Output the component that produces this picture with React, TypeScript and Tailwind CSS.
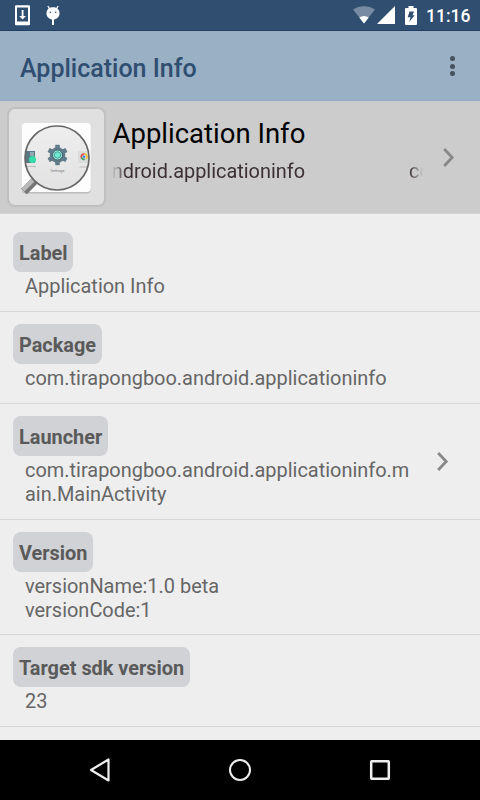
import React from 'react';

interface InfoRowProps {
  label: string;
  lines: string[];
  hasLink?: boolean;
  className?: string;
}

const rows: InfoRowProps[] = [
  { label: 'Label', lines: ['Application Info'], className: 'h-[92px]' },
  { label: 'Package', lines: ['com.tirapongboo.android.applicationinfo'], className: 'h-[92px]' },
  {
    label: 'Launcher',
    lines: ['com.tirapongboo.android.applicationinfo.m', 'ain.MainActivity'],
    hasLink: true,
    className: 'h-[116px]'
  },
  { label: 'Version', lines: ['versionName:1.0 beta', 'versionCode:1'], className: 'h-[115px]' },
  { label: 'Target sdk version', lines: ['23'], className: 'h-[92px]' }
];

const Chevron: React.FC = () => (
  <svg className="w-3 h-5 shrink-0" viewBox="0 0 12 20" fill="none" stroke="#888888" strokeWidth="2.8">
    <path d="M1.2 1 9.2 9.5 1.2 18" />
  </svg>
);

const StatusBar: React.FC = () => (
  <div className="h-[31px] bg-[#2f4e70] border-b border-[#1f4063] flex items-center justify-between pl-[15px] pr-[10px]">
    <div className="flex items-center gap-4">
      <svg className="w-[15px] h-[21px]" viewBox="0 0 15 21">
        <path
          fill="#fff"
          fillRule="evenodd"
          d="M1 .3h13a1 1 0 0 1 1 1v18a1 1 0 0 1-1 1H1a1 1 0 0 1-1-1v-18a1 1 0 0 1 1-1ZM2 2.5v14h11v-14Z"
        />
        <path fill="#fff" d="M6.7 5h1.8v6H11l-3.4 3.6L4.2 11h2.5Z" />
      </svg>
      <svg className="w-[14px] h-[21px]" viewBox="0 0 14 21">
        <path d="m1.8 1 2 3M12.2 1l-2 3" stroke="#fff" strokeWidth="1.3" />
        <path
          fill="#fff"
          d="M2.5 3.5C5 1.8 9 1.8 11.5 3.5 13 5 13.5 6.5 13.5 8.5c0 3.5-3 6-6.5 6s-6.5-2.5-6.5-6c0-2 .5-3.5 2-5Z"
        />
        <path fill="#fff" d="M6 14h2v6H6z" />
        <circle cx="4.3" cy="7.2" r=".8" fill="#2f4e70" />
        <circle cx="9.7" cy="7.2" r=".8" fill="#2f4e70" />
      </svg>
    </div>
    <div className="flex items-center">
      <svg className="w-[22px] h-[18px]" viewBox="0 0 22 18">
        <path fill="#fff" fillOpacity=".35" d="M0 3.5C6.5-1 15.5-1 22 3.5L11 17.5Z" />
        <path fill="#fff" d="M6.3 11.5c3-2 6.4-2 9.4 0L11 17.5Z" />
      </svg>
      <svg className="w-[18px] h-[18px] ml-[2px]" viewBox="0 0 18 18">
        <path fill="#fff" d="M18 0v18H0Z" />
      </svg>
      <svg className="w-3 h-[19px] ml-[10px] mr-[9px]" viewBox="0 0 12 19">
        <path
          fill="#fff"
          d="M3.5 0h5v2H11a1 1 0 0 1 1 1v15a1 1 0 0 1-1 1H1a1 1 0 0 1-1-1V3a1 1 0 0 1 1-1h2.5Z"
        />
        <path fill="#2f4e70" d="M4.5 5.5H9L7.5 9.3H9.7L4.2 16 5.5 11.2H2.7Z" />
      </svg>
      <span className="w-[44px] text-[17.5px] leading-none font-medium text-white pt-[3px]">11:16</span>
    </div>
  </div>
);

const Toolbar: React.FC = () => (
  <div className="h-[70px] bg-[#9ab0c5] border-b border-[#8eabc9] flex items-center justify-between pl-[20px] pr-[25px]">
    <h1 className="text-[25px] leading-none font-medium text-[#2f4e70] pt-[5px]">Application Info</h1>
    <div className="flex flex-col gap-[2.5px] pt-[1px]">
      <span className="w-[5px] h-[5px] rounded-full bg-[#46525e]" />
      <span className="w-[5px] h-[5px] rounded-full bg-[#46525e]" />
      <span className="w-[5px] h-[5px] rounded-full bg-[#46525e]" />
    </div>
  </div>
);

const Gear: React.FC = () => (
  <g transform="translate(36.5 33)">
    <g fill="#607b89">
      <circle r="7.8" />
      <rect x="-2.3" y="-10.3" width="4.6" height="20.6" rx=".8" />
      <rect x="-2.3" y="-10.3" width="4.6" height="20.6" rx=".8" transform="rotate(60)" />
      <rect x="-2.3" y="-10.3" width="4.6" height="20.6" rx=".8" transform="rotate(120)" />
    </g>
    <circle r="5" fill="#8ff0dc" stroke="#44616d" strokeWidth="1" />
    <circle r="3.2" fill="#6fe8d0" stroke="#4b8a8a" strokeWidth=".8" />
  </g>
);

const AppIcon: React.FC = () => (
  <div className="w-[99px] h-[100px] shrink-0 rounded-[8px] border-[2.5px] border-[#c0c0c0] bg-[#e0e0e0] flex items-center justify-center pt-px">
    <svg className="w-[72px] h-[72px]" viewBox="0 0 72 72">
      <defs>
        <clipPath id="lens">
          <circle cx="36" cy="36" r="32" />
        </clipPath>
        <linearGradient id="glass" x1="0" y1="0" x2="0" y2="1">
          <stop offset="0" stopColor="#eeeeee" />
          <stop offset="1" stopColor="#e2e2e2" />
        </linearGradient>
      </defs>
      <rect x=".8" y="2" width="69" height="69.5" rx="4" fill="#bdbdbd" />
      <rect x=".8" y="1" width="69" height="69" rx="4" fill="#fdfdfd" />
      <path d="M14 58.5 3 69.5" stroke="#777" strokeWidth="8" />
      <path d="M13 57 2 68" stroke="#b9b9b9" strokeWidth="4" />
      <circle cx="36" cy="36" r="32" fill="url(#glass)" />
      <g clipPath="url(#lens)">
        <rect x="4" y="29" width="10" height="12" fill="#5b7784" />
        <rect x="9" y="30" width="4" height="4" fill="#93a8b1" />
        <circle cx="11.5" cy="37.5" r="3.6" fill="#35dba8" />
        <rect x="57" y="29" width="14" height="12" rx="1" fill="#dcdcdc" />
        <path d="M4 44.5h11M58.5 45h8" stroke="#bcbcbc" strokeWidth="1" />
      </g>
      <g transform="translate(0 1)">
        <g fill="none" strokeWidth="1.8">
          <path d="M60.5 35a2.7 2.7 0 0 1 3-3.8" stroke="#e2574c" />
          <path d="M63.5 31a2.7 2.7 0 0 1 1.5 4.8" stroke="#f2c53d" />
          <path d="M60.5 34.5a2.7 2.7 0 0 0 3.5 1.8" stroke="#43a667" />
        </g>
        <circle cx="63" cy="33.8" r="1.3" fill="#4a86e8" />
      </g>
      <Gear />
      <text x="36.5" y="50" textAnchor="middle" fontSize="3.8" fill="#777">
        Settings
      </text>
      <circle cx="36" cy="36" r="32" fill="none" stroke="#666" strokeWidth="1.7" />
    </svg>
  </div>
);

const AppHeader: React.FC = () => (
  <div className="h-[113px] bg-[#cccccc] border-b border-[#d5d5d5] flex pl-[7px] pr-[25px] pt-[6px]">
    <AppIcon />
    <div className="w-[311px] shrink-0 ml-[6px] pt-[9px] overflow-hidden">
      <div className="pl-[.5px] text-[27.5px] leading-9 text-black whitespace-nowrap">Application Info</div>
      <div className="mt-[8px] flex justify-end whitespace-nowrap overflow-hidden text-[19.9px] leading-6 text-[#3b3033] [mask-image:linear-gradient(to_right,transparent,black_14px,black_calc(100%-14px),transparent)]">
        <div className="w-[193px] shrink-0 flex justify-end">com.tirapongboo.android.applicationinfo</div>
        <div className="w-[118px] shrink-0 pl-[104px] overflow-hidden">com.tirapongboo</div>
      </div>
    </div>
    <div className="ml-[20px] pt-[41px]">
      <Chevron />
    </div>
  </div>
);

const InfoRow: React.FC<InfoRowProps> = ({ label, lines, hasLink = false, className = '' }) => (
  <div className={`${className} shrink-0 flex items-center justify-between border-b border-[#d6d6d6] pl-[12.5px] pr-[31px]`}>
    <div className="h-full pt-3 flex flex-col items-start">
      <span className="flex items-center h-[39.5px] pl-[6.5px] pr-[5.5px] pt-[4px] rounded-lg bg-[#d1d2d6] text-[19.9px] font-bold text-[#5a5a5a] whitespace-nowrap">
        {label}
      </span>
      <div className="pl-[12.5px] mt-[2px] text-[19.95px] leading-6 text-[#666666] whitespace-nowrap">
        {lines.map((line) => (
          <div key={line}>{line}</div>
        ))}
      </div>
    </div>
    {hasLink && <Chevron />}
  </div>
);

const NavBar: React.FC = () => (
  <div className="h-[60px] shrink-0 bg-black flex items-center justify-between pl-[87px] pr-[89px]">
    <svg className="w-6 h-6" viewBox="0 0 24 24" fill="none" stroke="#eeeeee" strokeWidth="2.2" strokeLinejoin="round">
      <path d="M21.5 1.5v21L4 12Z" />
    </svg>
    <svg className="w-6 h-6" viewBox="0 0 24 24" fill="none" stroke="#eeeeee" strokeWidth="2">
      <circle cx="12" cy="12" r="10" />
    </svg>
    <svg className="w-[22px] h-[22px]" viewBox="0 0 22 22" fill="none" stroke="#eeeeee" strokeWidth="2.5">
      <rect x="2.2" y="2.2" width="17.6" height="17.6" rx=".5" />
    </svg>
  </div>
);

const App: React.FC = () => (
  <div className="w-[480px] h-[800px] overflow-hidden flex flex-col bg-[#eeeeee] font-['Roboto',sans-serif]">
    <StatusBar />
    <Toolbar />
    <AppHeader />
    <div className="flex-1 min-h-0 overflow-hidden flex flex-col pt-[6px]">
      {rows.map((row) => (
        <InfoRow key={row.label} {...row} />
      ))}
    </div>
    <NavBar />
  </div>
);

export default App;
